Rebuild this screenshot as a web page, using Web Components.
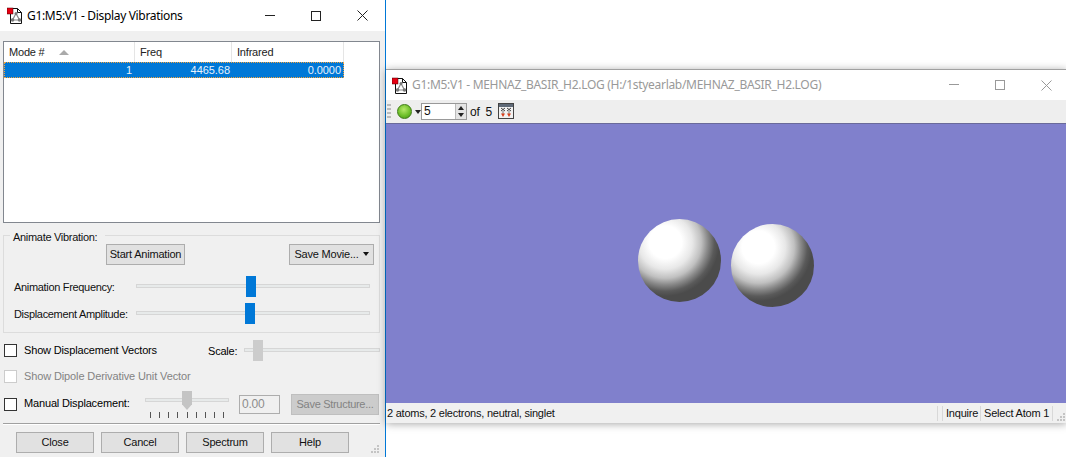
<!DOCTYPE html>
<html><head><meta charset="utf-8"><title>GaussView</title>
<style>
html,body{margin:0;padding:0;background:#fff}
body{font:11px "Liberation Sans",Arial,sans-serif;color:#000;letter-spacing:-.2px}
</style></head><body>
<gv-desktop>
  <gv-window style="left:0;top:0;width:385px;height:457px;--edge:#0078d7" win-title="G1:M5:V1 - Display Vibrations" active>
    <gv-dialog></gv-dialog>
  </gv-window>
  <gv-window style="left:386px;top:69px;width:680px;height:354px;--edge:transparent;--title:#999" win-title="G1:M5:V1 - MEHNAZ_BASIR_H2.LOG (H:/1styearlab/MEHNAZ_BASIR_H2.LOG)">
    <gv-viewer></gv-viewer>
  </gv-window>
</gv-desktop>
<script>
const ICON=`<svg width="16" height="17" viewBox="0 0 16 17" style="display:block"><path d="M3.500 1.500h7l4 4v11h-11z" fill="#fff" stroke="#111"/><path d="M10.500 1.500v4h4" fill="none" stroke="#111"/><path d="M9 6.500l-3.500 6.500h7z" fill="none" stroke="#888" stroke-width="1.200"/><circle cx="9" cy="6.500" r="1.500" fill="#777"/><circle cx="5.500" cy="13" r="1.800" fill="#777"/><circle cx="12.500" cy="13" r="1.800" fill="#777"/><rect x="0" y="1" width="6" height="6" fill="#e60012" stroke="#400" stroke-width=".5"/></svg>`;
function def(name,html,setup){customElements.define(name,class extends HTMLElement{connectedCallback(){if(this.shadowRoot)return;const s=this.attachShadow({mode:'open'});s.innerHTML=typeof html==='function'?html(this):html;setup&&setup(this,s)}})}

def('gv-desktop',`<style>:host{display:block;position:relative;width:1066px;height:457px;overflow:hidden;background:#fff}</style><slot></slot>`);

def('gv-window',h=>{const c=h.getAttribute('win-title');const a=h.hasAttribute('active');const s=a?'#222':'#999';return `<style>
:host{display:flex;flex-direction:column;position:absolute;background:#f0f0f0;border-right:1px solid var(--edge,transparent);box-shadow:${a?'none':'0 1px 8px rgba(0,0,0,.35)'}}
.bar{display:flex;align-items:center;background:#fff;flex:none;height:${a?31:30}px;${a?'':'border-top:1px solid #a0a0a0'}}
.ic{margin-left:${a?7:6}px;width:16px;height:17px;flex:none}
.t{margin-left:4px;font:12px "Noto Sans","Open Sans",sans-serif;color:var(--title,#000);white-space:nowrap;flex:1;letter-spacing:${a?'-.33px':'-.3px'};${a?'':'padding-bottom:2px'}}
svg.b{flex:none;display:block}
.btns{display:flex;margin-right:${a?'0':'-3px'}}
.btn{width:46px;height:30px;display:flex;align-items:center;justify-content:center}
.body{flex:1;min-height:0;display:flex;flex-direction:column}
</style><div class="bar"><div class="ic">${ICON}</div><div class="t">${c}</div><div class="btns">
<div class="btn"><svg class="b" width="10" height="10" viewBox="0 0 10 10"><path d="M0 4.500h10" stroke="${s}" fill="none"/></svg></div>
<div class="btn"><svg class="b" width="10" height="10" viewBox="0 0 10 10"><rect x=".5" y=".5" width="9" height="9" stroke="${s}" fill="none"/></svg></div>
<div class="btn"><svg class="b" width="11" height="11" viewBox="0 0 11 11"><path d="M.5.500l10 10M10.500.500l-10 10" stroke="${s}" fill="none"/></svg></div>
</div></div><div class="body"><slot></slot></div>`});

def('gv-button',h=>`<style>:host{display:flex;align-items:center;justify-content:center;box-sizing:border-box;height:21px;padding-bottom:1px;background:#e1e1e1;border:1px solid #adadad;white-space:nowrap;font-size:11px;color:#111}
:host([disabled]){background:#ccc;border-color:#bfbfbf;color:#838383;letter-spacing:-.3px}</style><slot></slot>`);

def('gv-check',`<style>:host{display:flex;align-items:center;gap:7px;white-space:nowrap;margin-left:1px;letter-spacing:-.16px}
i{display:block;box-sizing:border-box;width:13px;height:13px;border:1px solid #333;background:#fff;flex:none}
span{padding-bottom:var(--lift,0)}
:host([disabled]){color:#838383;letter-spacing:-.12px}:host([disabled]) i{border-color:#ccc}</style><i></i><span><slot></slot></span>`);

def('gv-slider',h=>{const c=h.getAttribute('color')||'#0078d7';const down=h.hasAttribute('ptr');return `<style>:host{display:block;position:relative;height:21px}
.tr{box-sizing:border-box;height:4px;margin-top:${h.getAttribute('tr')||8}px;background:#e7eaea;border:1px solid #d6d6d6}
.th{position:absolute;top:0;left:var(--pos);width:10px;height:${down?19:21}px;background:${c};${down?'clip-path:polygon(0 0,100% 0,100% 70%,50% 100%,0 70%)':''}}
.tk{display:flex;justify-content:space-between;margin:10px 5px 0;}
.tk b{display:block;width:1px;height:6px;background:#555}</style><div class="tr"></div><div class="th"></div>${down?'<div class="tk">'+'<b></b>'.repeat(9)+'</div>':''}`});

def('gv-list',`<style>:host{display:block;box-sizing:border-box;height:182px;background:#fff;border:1px solid #82878f}
.r{display:grid;grid-template-columns:131px 97px 112px;width:340px}
.h{height:20px;align-items:center}
.h span{display:flex;align-items:center;height:20px;border-right:1px solid #e5e5e5;padding-left:5px;color:#222;box-sizing:border-box}
.arr{width:0;height:0;border:5px solid transparent;border-top:0;border-bottom:5px solid #aaa;margin-left:14px}
.s{height:16px;background:#0078d7;color:#e8f2fb;outline:1px dotted #f2a33c;outline-offset:-1px;align-items:center;box-sizing:border-box;letter-spacing:-.05px}
.s span{text-align:right;padding-right:2px}.s span:first-child,.s span:last-child{padding-right:3px}</style>
<div class="r h"><span>Mode #<i class="arr"></i></span><span>Freq</span><span>Infrared</span></div>
<div class="r s"><span>1</span><span>4465.68</span><span>0.0000</span></div>`);

def('gv-dialog',`<style>:host{display:block;flex:1;padding:10px 5px 0 3px;position:relative}
.g{box-sizing:border-box;height:98px;margin-top:12px;border:1px solid #dcdcdc;padding:8px 5px 0 10px;position:relative}
.lg{position:absolute;left:6px;top:-5px;background:#f0f0f0;padding:0 8px 0 3px;height:13px;line-height:13px;color:#111;letter-spacing:-.3px}
.br{display:flex;justify-content:space-between}
.br gv-button:first-child{width:79px;margin-left:92px}
.br gv-button:last-child{width:85px}
.sr{display:grid;grid-template-columns:122px 234px;align-items:start;height:21px}
.sr span{line-height:23px;color:#111;letter-spacing:-.32px;white-space:nowrap}
.sr.a{margin-top:11px}.sr.b{margin-top:6px}
.tri{display:inline-block;border:3.500px solid transparent;border-top:4px solid #111;border-bottom:0;margin-left:4px;vertical-align:1px}
.r1{display:grid;grid-template-columns:205px 36px 136px;margin-top:7px;align-items:center;height:21px;--lift:2px}
.r2{margin-top:8px;height:14px;display:flex;align-items:center}
.r3{display:grid;margin-top:8px;height:27px;grid-template-columns:142px 84px 10px 41px 11px 88px;--lift:2px}
.r3 gv-check{align-self:start;margin-top:6px}
.r3 gv-slider{height:27px}
.inp{box-sizing:border-box;height:19px;margin-top:4px;border:1px solid #adadad;color:#8c8c8c;font-size:12px;padding-left:2px;line-height:17px;grid-column:4}
.r3 gv-button{margin-top:3px;grid-column:6}
hr{border:0;border-top:1px solid #a0a0a0;border-bottom:1px solid #fff;margin:5px 0 0;width:377px}
.bt{display:flex;gap:7px;margin:7px 0 0 13px}
.bt gv-button{width:78px}
.grip{position:absolute;right:6px;bottom:4px;width:8px;height:8px}
</style>
<gv-list></gv-list>
<div class="g"><div class="lg">Animate Vibration:</div>
  <div class="br"><gv-button>Start Animation</gv-button><gv-button>Save Movie...<i class="tri"></i></gv-button></div>
  <div class="sr a"><span>Animation Frequency:</span><gv-slider style="--pos:110px"></gv-slider></div>
  <div class="sr b"><span>Displacement Amplitude:</span><gv-slider style="--pos:109px"></gv-slider></div>
</div>
<div class="r1"><gv-check>Show Displacement Vectors</gv-check><span>Scale:</span><gv-slider color="#ccc" style="--pos:9px"></gv-slider></div>
<div class="r2"><gv-check disabled>Show Dipole Derivative Unit Vector</gv-check></div>
<div class="r3"><gv-check>Manual Displacement:</gv-check><gv-slider ptr color="#c4c4c4" tr="7" style="--pos:37px"></gv-slider><div class="inp">0.00</div><gv-button disabled>Save Structure...</gv-button></div>
<hr>
<div class="bt"><gv-button>Close</gv-button><gv-button>Cancel</gv-button><gv-button>Spectrum</gv-button><gv-button>Help</gv-button></div>
<svg class="grip" viewBox="0 0 8 8"><g fill="#c4c4c4"><rect x="6" y="0" width="2" height="2"/><rect x="3" y="3" width="2" height="2"/><rect x="6" y="3" width="2" height="2"/><rect x="0" y="6" width="2" height="2"/><rect x="3" y="6" width="2" height="2"/><rect x="6" y="6" width="2" height="2"/></g></svg>`);

def('gv-sphere',`<style>:host{display:block;position:absolute;width:83px;height:83px;border-radius:50%;background:radial-gradient(circle at 33% 28%,#fff 0,#fff 20%,#e8e8e8 33%,#c0c0c0 44%,#8a8a8a 52%,#5a5a5a 60%,#4b4b4b 66%,#4b4b4b 100%)}</style>`);

def('gv-viewer',`<style>:host{display:flex;flex-direction:column;flex:1;min-height:0}
.tb{height:23px;flex:none;background:#eee;display:flex;align-items:center;position:relative;color:#111}
.grip{width:4px;height:17px;margin-left:1px;background:radial-gradient(circle,#bbb 1px,transparent 1.200px) 0 0/2px 4px}
.ball{width:15px;height:15px;border-radius:50%;margin-left:6px;border:1px solid #3d7a14;box-sizing:border-box;background:radial-gradient(circle at 45% 35%,#b5e86a,#6fc02a 55%,#3f8f14)}
.dd{border:3px solid transparent;border-top:4px solid #222;border-bottom:0;margin:1px 0 0 3px;width:0;height:0}
.spin{box-sizing:border-box;width:46px;height:17px;border:1px solid #999;background:#fff;display:flex;font-size:12px;line-height:15px;padding-left:2px;justify-content:space-between}
.ar{width:10px;background:#e4e4e4;border-left:1px solid #bbb;display:flex;flex-direction:column;justify-content:space-around;align-items:center}
.ar i{border:3px solid transparent;width:0;height:0}.ar i:first-child{border-top:0;border-bottom:4px solid #222}.ar i:last-child{border-bottom:0;border-top:4px solid #222}
.of{margin-left:3px;font-size:12px}.n{margin-left:6px;font-size:12px}
.ti{margin-left:6px;display:block;margin-top:-1px}
.vp{flex:1;min-height:0;background:#8080cc;position:relative;border-top:1px solid #6a6a9a}
.sb{height:20px;flex:none;background:#f0f0f0;display:flex;align-items:center;color:#111}
.sb .m{flex:1;padding-left:1px;letter-spacing:-.24px;white-space:nowrap}
.sb .c{box-sizing:border-box;height:15px;line-height:15px;border-left:1px solid #d8d8d8;padding-left:3px;white-space:nowrap}
.grip2{width:8px;height:8px;margin:7px 1px 0 4px;flex:none}
</style>
<div class="tb"><div class="grip"></div><div class="ball"></div><div class="dd"></div><div class="spin">5<div class="ar"><i></i><i></i></div></div><span class="of">of</span><span class="n">5</span>
<svg class="ti" width="16" height="16" viewBox="0 0 16 16"><rect x=".5" y=".5" width="15" height="15" fill="#f2f2f2" stroke="#444"/><rect x="1" y="1" width="14" height="3" fill="#5f6a78"/><path d="M3 5l4 3M7 5l-4 3M9 5l4 3M13 5l-4 3" stroke="#444"/><path d="M5 8v3M11 8v3" stroke="#777"/><path d="M3 10.500h4l-2 3.500zM9 10.500h4l-2 3.500z" fill="#d9411e"/></svg></div>
<div class="vp"><gv-sphere style="left:252px;top:95px"></gv-sphere><gv-sphere style="left:345px;top:100px"></gv-sphere></div>
<div class="sb"><span class="m">2 atoms, 2 electrons, neutral, singlet</span><span class="c" style="width:5px"></span><span class="c" style="width:38px">Inquire</span><span class="c" style="width:72px">Select Atom 1</span><span class="c" style="width:1px;padding:0"></span>
<svg class="grip2" viewBox="0 0 8 8"><g fill="#c4c4c4"><rect x="6" y="0" width="2" height="2"/><rect x="3" y="3" width="2" height="2"/><rect x="6" y="3" width="2" height="2"/><rect x="0" y="6" width="2" height="2"/><rect x="3" y="6" width="2" height="2"/><rect x="6" y="6" width="2" height="2"/></g></svg></div>`);
</script>
</body></html>
